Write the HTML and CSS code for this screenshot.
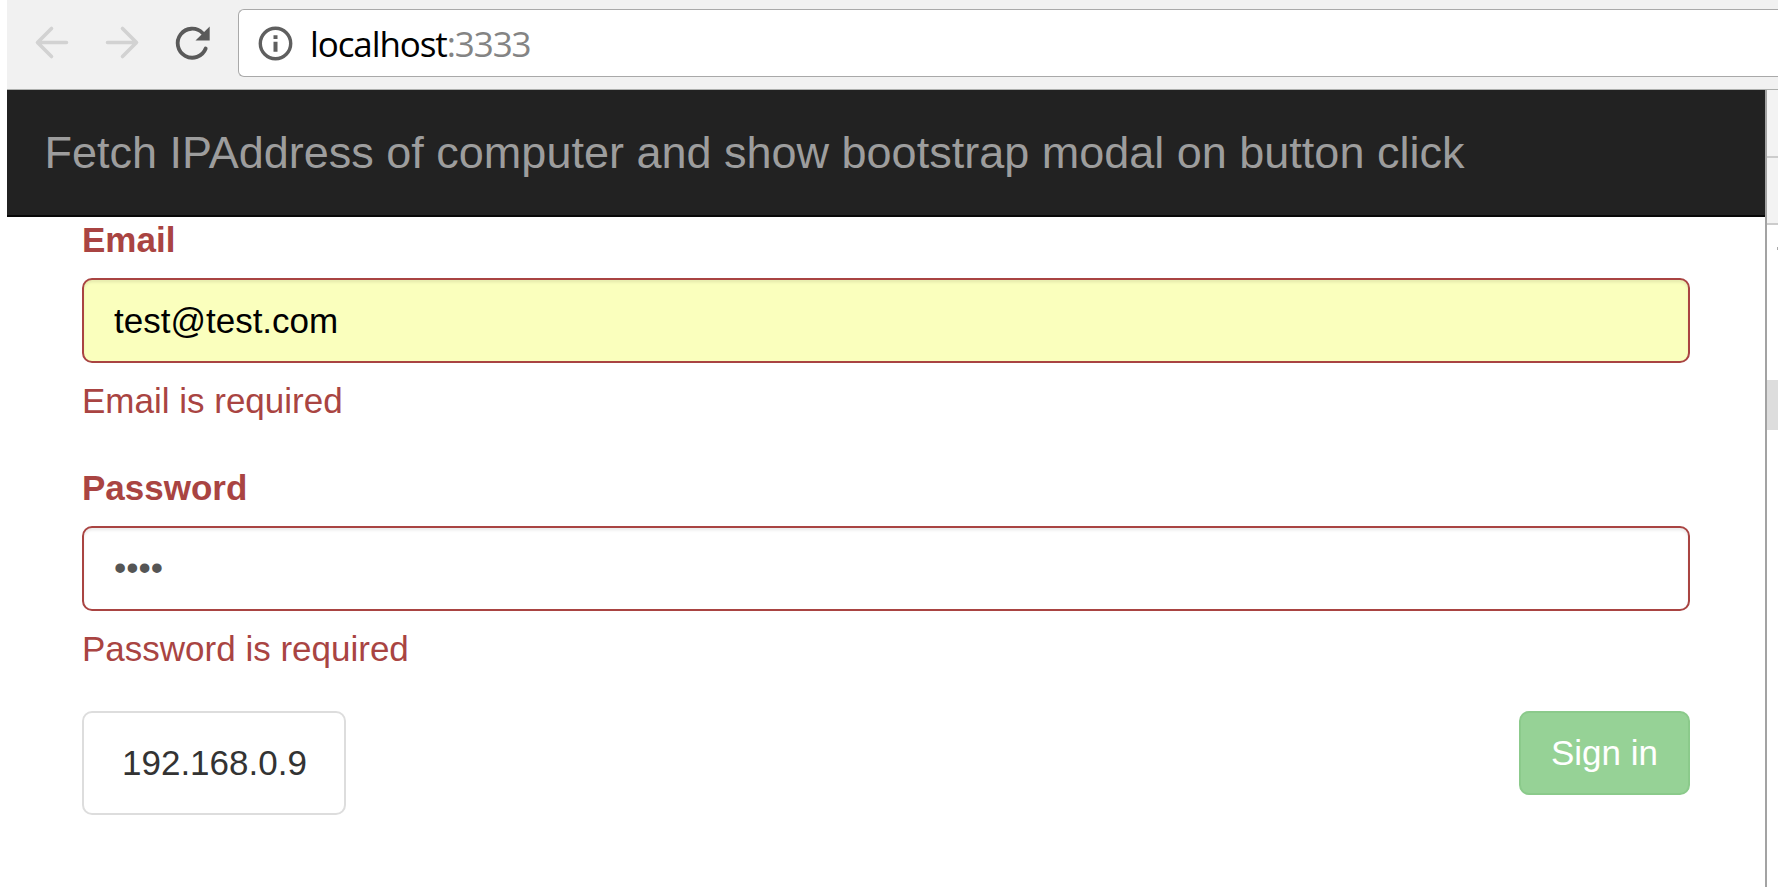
FILE: index.html
```html
<!DOCTYPE html>
<html lang="en">
<head>
<meta charset="utf-8">
<title>localhost:3333</title>
<link rel="stylesheet" href="styles.css">
</head>
<body>
<div class="window">
  <header class="toolbar">
    <svg class="nav-icons" width="231" height="89" viewBox="7 0 231 89" fill="none" stroke-linecap="round" stroke-linejoin="round">
      <g stroke="#d2d2d2" stroke-width="3.6">
        <path d="M66.500 42.500H37.500M51.500 28.500L37.500 42.500L51.500 56.500"/>
        <path d="M107.500 42.500H136.500M122.500 28.500L136.500 42.500L122.500 56.500"/>
      </g>
      <path d="M205.700 48.500A14.500 14.500 0 1 1 202.500 33" stroke="#5a5a5a" stroke-width="3.800"/>
      <path d="M209.700 26.500V40.500H195.500Z" fill="#5a5a5a"/>
    </svg>
    <div class="address">
      <svg class="info" width="36" height="36" viewBox="0 0 36 36">
        <circle cx="17.500" cy="18.500" r="15.200" fill="none" stroke="#5f5f5f" stroke-width="3.400"/>
        <path d="M15.500 10.300h4v3.800h-4zM15.500 16.800h4v10h-4z" fill="#5f5f5f"/>
      </svg>
      <div class="url"><span class="host">localhost</span><span class="port">:3333</span></div>
    </div>
  </header>
  <div class="viewport">
    <main class="page">
      <nav class="navbar">Fetch IPAddress of computer and show bootstrap modal on button click</nav>
      <form class="form">
        <div class="group">
          <label class="label" for="email">Email</label>
          <input class="control autofilled" id="email" type="text" value="test@test.com">
          <span class="help">Email is required</span>
        </div>
        <div class="group">
          <label class="label" for="password">Password</label>
          <input class="control" id="password" type="password" value="test">
          <span class="help">Password is required</span>
        </div>
        <div class="actions">
          <div class="ip">192.168.0.9</div>
          <button class="signin" type="button" disabled>Sign in</button>
        </div>
      </form>
    </main>
    <aside class="devtools">
      <div class="bar first"></div>
      <div class="bar second"></div>
      <div class="tick"></div>
      <div class="row"></div>
    </aside>
  </div>
</div>
</body>
</html>
```
FILE: styles.css
```css
* { box-sizing: border-box; }
body {
  margin: 0;
  background: #fff;
  font: 35px/50px "Liberation Sans", Arial, sans-serif;
}
.window {
  display: flex;
  flex-direction: column;
  height: 887px;
  margin-left: 7px;
  overflow: hidden;
}
.toolbar {
  display: flex;
  height: 90px;
  flex: none;
  background: #f1f1f1;
  border-bottom: 1px solid #adafad;
}
.nav-icons { display: block; flex: none; }
.address {
  display: flex;
  align-items: center;
  flex: 1;
  height: 68px;
  margin-top: 9px;
  padding-left: 19px;
  background: #fff;
  border: 1px solid #a9a9a9;
  border-right: 0;
  border-radius: 6px 0 0 6px;
  font-family: "Open Sans", "Noto Sans", sans-serif;
}
.info { margin-right: 16px; }
.url { padding-top: 2px; letter-spacing: -1.1px; }
.host { color: #000; }
.port { color: #848484; }
.viewport { display: flex; flex: 1; }
.page { flex: 1; }
.navbar {
  height: 127px;
  padding: 37.5px;
  background: #222;
  border-bottom: 2px solid #080808;
  color: #9d9d9d;
  font-size: 45px;
  white-space: nowrap;
}
.form { margin-top: -2px; padding: 0 75px; }
.group { display: flex; flex-direction: column; margin-bottom: 37px; color: #a94442; }
.label { font-weight: 700; margin-bottom: 13px; }
.control {
  width: 100%;
  height: 85px;
  margin: 0 0 13px;
  padding: 15px 30px 16px;
  border: 2px solid #a94442;
  border-radius: 10px;
  outline: 0;
  background: #fff;
  box-shadow: inset 0 2.5px 2.5px rgba(0, 0, 0, .075);
  color: #555;
  font: inherit;
}
.autofilled { padding: 16px 30px 15px; background: #faffbd; color: #000; }
.actions { display: flex; justify-content: space-between; align-items: flex-start; }
.ip {
  padding: 25px 37px 25px 38px;
  border: 2px solid #ddd;
  border-radius: 10px;
  color: #333;
}
.signin {
  height: 84px;
  padding: 15px 30px;
  border: 2px solid #8bca8b;
  border-radius: 10px;
  background: #96d296;
  color: #fff;
  font: inherit;
}
.devtools { width: 13px; border-left: 2px solid #a3a3a3; background: #fff; }
.bar { background: #f3f3f3; border-bottom: 2px solid #ccc; }
.first { height: 68px; }
.second { height: 67px; }
.tick { width: 1px; height: 3px; margin: 22px 0 0 10px; background: #aaa; }
.row { height: 50px; margin-top: 130px; background: #ddd; }
```
